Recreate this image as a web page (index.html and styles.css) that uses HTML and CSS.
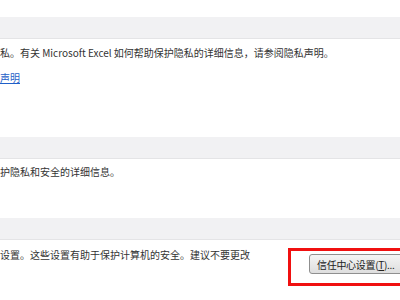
FILE: index.html
```html
<!DOCTYPE html>
<html lang="zh-CN">
<head>
    <meta charset="UTF-8">
    <title>信任中心</title>
    <link rel="stylesheet" href="styles.css">
</head>
<body>
<div class="page">
    <div class="band"></div>
    <div class="section first">
        <p class="line">私。有关 Microsoft Excel 如何帮助保护隐私的详细信息，请参阅隐私声明。</p>
        <p class="line link-line"><a href="#">声明</a></p>
    </div>

    <div class="band"></div>
    <div class="section second">
        <p class="line">护隐私和安全的详细信息。</p>
    </div>

    <div class="band"></div>
    <div class="section third">
        <p class="line text-col">设置。这些设置有助于保护计算机的安全。建议不要更改</p>
        <div class="mark">
            <button class="btn">信任中心设置(<u>T</u>)...</button>
        </div>
    </div>
</div>
</body>
</html>
```

FILE: styles.css
```css
* {
    padding: 0;
    margin: 0;
}

body {
    width: 400px;
    height: 300px;
    overflow: hidden;
    background: #fff;
    font-family: "Noto Sans CJK SC", "Noto Sans", sans-serif;
    font-size: 10px;
    color: #333;
}

.page {
    padding-top: 17px;
}

.band {
    height: 21px;
    background: #f1f1f3;
    border-bottom: 1px solid #e4e4e6;
}

.line {
    line-height: 16px;
    white-space: nowrap;
}

.section.first {
    padding-top: 6px;
    height: 92px;
}

.link-line {
    margin-top: 9px;
}

.link-line a {
    color: #1f5fc8;
    text-decoration: underline;
}

.section.second {
    padding-top: 5px;
    height: 54px;
}

.section.third {
    display: flex;
    align-items: flex-start;
}

.text-col {
    flex: 0 0 288px;
    margin-top: 7px;
}

.mark {
    flex: 0 0 auto;
    width: 130px;
    margin-top: 8px;
    padding: 3px 0 9px 18px;
    border: 3px solid #f01010;
}

.btn {
    display: block;
    height: 20px;
    width: 110px;
    padding-left: 7px;
    text-align: left;
    font-family: "Noto Sans CJK SC", "Noto Sans", sans-serif;
    font-size: 10px;
    letter-spacing: -0.3px;
    color: #222;
    background: linear-gradient(#f4f4f4, #dedede);
    border: 1px solid #8f8f8f;
    border-radius: 3px;
}
```
